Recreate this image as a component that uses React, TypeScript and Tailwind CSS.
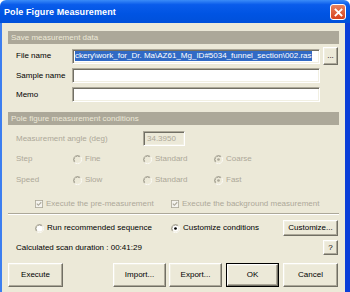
import React from "react";

function Radio({ checked, disabled }: { checked?: boolean; disabled?: boolean }) {
  const fill = disabled ? "#ECE9D8" : "#FFFFFF";
  const dot = disabled ? "#ACA899" : "#000000";
  return (
    <svg width="9" height="9" viewBox="0 0 12 12" className="shrink-0">
      <path d="M2.11 9.89 A5.5 5.5 0 0 1 9.89 2.11" stroke="#ACA899" strokeWidth="1" fill="none" />
      <path d="M9.89 2.11 A5.5 5.5 0 0 1 2.11 9.89" stroke="#FFFFFF" strokeWidth="1" fill="none" />
      <path d="M2.82 9.18 A4.5 4.5 0 0 1 9.18 2.82" stroke="#716F64" strokeWidth="1" fill="none" />
      <path d="M9.18 2.82 A4.5 4.5 0 0 1 2.82 9.18" stroke="#F1EFE2" strokeWidth="1" fill="none" />
      <circle cx="6" cy="6" r="4" fill={fill} />
      {checked && <circle cx="6" cy="6" r="1.8" fill={dot} />}
    </svg>
  );
}

function Check() {
  return (
    <svg width="8" height="8" viewBox="0 0 10 10" className="shrink-0">
      <rect x="0.5" y="0.5" width="9" height="9" fill="#F4F3EE" stroke="#ACA899" />
      <path d="M2.3 4.6 L4.2 6.6 L7.8 2.8" stroke="#ACA899" strokeWidth="1.4" fill="none" />
    </svg>
  );
}

function Btn({ children, className = "" }: { children: React.ReactNode; className?: string }) {
  return (
    <div
      className={`flex items-center justify-center bg-[#ECE9D8] border border-t-white border-l-white border-r-[#716F64] border-b-[#716F64] shadow-[inset_-1px_-1px_0_#ACA899,inset_1px_1px_0_#F1EFE2] text-[8px] text-black shrink-0 ${className}`}
    >
      {children}
    </div>
  );
}

function Field({ className = "", children }: { className?: string; children?: React.ReactNode }) {
  return (
    <div
      className={`flex items-center overflow-hidden border border-t-[#ACA899] border-l-[#ACA899] border-r-white border-b-white shadow-[inset_1px_1px_0_#716F64,inset_-1px_-1px_0_#F1EFE2] shrink-0 ${className}`}
    >
      {children}
    </div>
  );
}

function SectionBar({ text }: { text: string }) {
  return (
    <div className="h-[13px] bg-[#ACA899] flex items-center pl-[3px] text-[8px] text-[#ECE9D8]">{text}</div>
  );
}

export default function App() {
  return (
    <div className="w-[350px] h-[292px] flex flex-col overflow-hidden font-['Liberation_Sans',Arial,sans-serif] text-[8px] text-black leading-none">
      {/* Title bar */}
      <div className="h-[23px] shrink-0 flex items-center justify-between pl-[4px] pr-[4px] bg-[linear-gradient(to_bottom,#3B8CF8_0%,#0A5CEB_20%,#0054E3_60%,#0050DA_100%)] rounded-t-[6px]">
        <span className="text-white font-bold text-[9px] mt-[2px] tracking-[0.1px]">Pole Figure Measurement</span>
        <div className="w-[16px] h-[16px] mt-[1px] rounded-[3px] border border-white bg-[linear-gradient(to_bottom,#E8825E,#D7411C)] flex items-center justify-center">
          <svg width="9" height="9" viewBox="0 0 9 9">
            <path d="M1.5 1.5 L7.5 7.5 M7.5 1.5 L1.5 7.5" stroke="white" strokeWidth="1.8" strokeLinecap="square" />
          </svg>
        </div>
      </div>

      {/* Body */}
      <div className="flex-1 bg-[#ECE9D8] border-l-2 border-l-[#3C7EF0] border-r-[5px] border-r-[#0A3ED8] flex flex-col pl-[6px] pr-[6px]">
        <div className="mt-[8px]">
          <SectionBar text="Save measurement data" />
        </div>

        {/* File name */}
        <div className="mt-[3px] h-[18px] flex items-center">
          <span className="w-[64px] pl-[8px] shrink-0">File name</span>
          <Field className="w-[248px] h-[15px] bg-white pl-[2px]">
            <span className="bg-[#316AC5] text-white whitespace-nowrap leading-[10px] px-[0px]">
              ckery\work_for_Dr. Ma\AZ61_Mg_ID#5034_funnel_section\002.ras
            </span>
          </Field>
          <Btn className="ml-[3px] w-[15px] h-[18px]">...</Btn>
        </div>

        {/* Sample name */}
        <div className="mt-[3px] h-[15px] flex items-center">
          <span className="w-[64px] pl-[8px] shrink-0">Sample name</span>
          <Field className="w-[248px] h-[15px] bg-white" />
        </div>

        {/* Memo */}
        <div className="mt-[4px] h-[15px] flex items-center">
          <span className="w-[64px] pl-[8px] shrink-0">Memo</span>
          <Field className="w-[248px] h-[15px] bg-white" />
        </div>

        <div className="mt-[10px]">
          <SectionBar text="Pole figure measurement conditions" />
        </div>

        {/* Measurement angle */}
        <div className="mt-[6px] h-[15px] flex items-center text-[#ACA899]">
          <span className="w-[135px] pl-[8px] shrink-0">Measurement angle (deg)</span>
          <Field className="w-[42px] h-[15px] bg-[#ECE9D8] pl-[3px]">34.3950</Field>
        </div>

        {/* Step */}
        <div className="mt-[6px] h-[14px] flex items-center text-[#ACA899]">
          <span className="w-[65px] pl-[8px] shrink-0">Step</span>
          <div className="w-[70px] flex items-center gap-[3px] shrink-0">
            <Radio disabled />
            <span>Fine</span>
          </div>
          <div className="w-[71px] flex items-center gap-[3px] shrink-0">
            <Radio disabled />
            <span>Standard</span>
          </div>
          <div className="flex items-center gap-[3px]">
            <Radio disabled checked />
            <span>Coarse</span>
          </div>
        </div>

        {/* Speed */}
        <div className="mt-[7px] h-[14px] flex items-center text-[#ACA899]">
          <span className="w-[65px] pl-[8px] shrink-0">Speed</span>
          <div className="w-[70px] flex items-center gap-[3px] shrink-0">
            <Radio disabled />
            <span>Slow</span>
          </div>
          <div className="w-[71px] flex items-center gap-[3px] shrink-0">
            <Radio disabled />
            <span>Standard</span>
          </div>
          <div className="flex items-center gap-[3px]">
            <Radio disabled checked />
            <span>Fast</span>
          </div>
        </div>

        {/* Checkboxes */}
        <div className="mt-[10px] h-[14px] flex items-center text-[#ACA899]">
          <div className="w-[163px] pl-[27px] flex items-center gap-[3px] shrink-0">
            <Check />
            <span>Execute the pre-measurement</span>
          </div>
          <div className="flex items-center gap-[3px]">
            <Check />
            <span>Execute the background measurement</span>
          </div>
        </div>

        {/* Separator */}
        <div className="mt-[2px] h-[2px] border-t border-t-[#ACA899] border-b border-b-white" />

        {/* Run / Customize */}
        <div className="mt-[5px] h-[16px] flex items-center">
          <div className="w-[163px] pl-[27px] flex items-center gap-[3px] shrink-0">
            <Radio />
            <span>Run recommended sequence</span>
          </div>
          <div className="flex items-center gap-[3px]">
            <Radio checked />
            <span>Customize conditions</span>
          </div>
          <Btn className="ml-auto mr-[1px] w-[55px] h-[16px]">Customize...</Btn>
        </div>

        {/* Calculated */}
        <div className="mt-[4px] h-[15px] flex items-center">
          <span className="pl-[8px]">Calculated scan duration : 00:41:29</span>
          <Btn className="ml-auto mr-[1px] w-[15px] h-[15px]">?</Btn>
        </div>

        {/* Bottom buttons */}
        <div className="mt-[8px] h-[24px] flex items-center">
          <Btn className="w-[55px] h-[24px]">Execute</Btn>
          <Btn className="ml-[50px] w-[53px] h-[24px]">Import...</Btn>
          <Btn className="ml-[3px] w-[53px] h-[24px]">Export...</Btn>
          <div className="ml-[4px] w-[53px] h-[24px] border border-black shrink-0 flex">
            <Btn className="flex-1 h-full">OK</Btn>
          </div>
          <Btn className="ml-[4px] w-[55px] h-[24px]">Cancel</Btn>
        </div>
      </div>
    </div>
  );
}
